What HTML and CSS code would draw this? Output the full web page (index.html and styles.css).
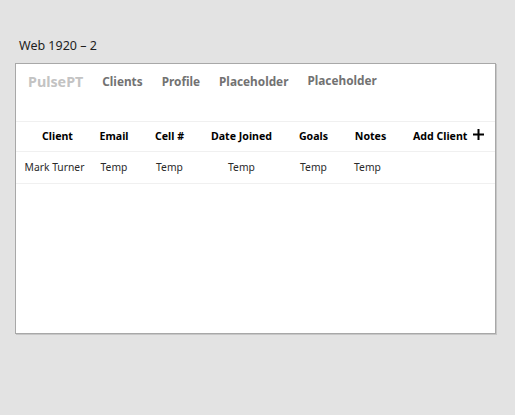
FILE: index.html
```html
<!DOCTYPE html>
<html>
<head>
<meta charset="utf-8">
<link rel="stylesheet" href="styles.css">
</head>
<body>
<div class="title">Web 1920 – 2</div>
<div class="card">
  <nav class="nav">
    <span class="brand">PulsePT</span>
    <span class="link">Clients</span>
    <span class="link">Profile</span>
    <span class="link">Placeholder</span>
    <span class="link raised">Placeholder</span>
  </nav>
  <div class="row head">
    <span>Client</span>
    <span>Email</span>
    <span>Cell #</span>
    <span>Date Joined</span>
    <span>Goals</span>
    <span>Notes</span>
    <span class="add">Add Client
      <svg class="plus" width="11" height="11" viewBox="0 0 11 11"><path d="M5.5 0v11M0 5.5h11" stroke="#000" stroke-width="2"/></svg>
    </span>
  </div>
  <div class="row data">
    <span class="name">Mark Turner</span>
    <span>Temp</span>
    <span>Temp</span>
    <span>Temp</span>
    <span>Temp</span>
    <span class="notes">Temp</span>
    <span></span>
  </div>
</div>
</body>
</html>
```

FILE: styles.css
```css
html, body {
  margin: 0;
  padding: 0;
  background: #e3e3e3;
  width: 515px;
  height: 415px;
  overflow: hidden;
  font-family: "Noto Sans", "Open Sans", sans-serif;
}
.title {
  padding: 36px 0 0 19px;
  height: 63px;
  box-sizing: border-box;
  font-size: 12.5px;
  line-height: 19px;
  color: #1e1e1e;
}
.card {
  margin-left: 15px;
  width: 479px;
  height: 269px;
  background: #fff;
  border: 1px solid #a8a8a8;
  box-shadow: 1px 1px 0 #c6c6c6;
}
.nav {
  display: flex;
  align-items: center;
  gap: 19px;
  padding: 0 0 0 12px;
  height: 34px;
}
.brand {
  font-size: 14.3px;
  font-weight: 700;
  color: #c3c3c3;
}
.link {
  font-size: 11.8px;
  font-weight: 700;
  color: #727272;
}
.raised { position: relative; top: -1px; }
.row {
  display: grid;
  grid-template-columns: 31px 28px 29px 61px 29px 31px auto;
  column-gap: 27px;
  padding-left: 26px;
  align-items: center;
  border-bottom: 1px solid #f0f0f0;
  box-sizing: border-box;
}
.row span { justify-self: center; white-space: nowrap; }
.head {
  margin-top: 23px;
  border-top: 1px solid #f0f0f0;
  height: 31px;
  padding-bottom: 2px;
  font-size: 10.6px;
  font-weight: 700;
  color: #000;
}
.head .add { justify-self: start; display: flex; align-items: center; gap: 6px; }
.data {
  height: 32px;
  padding-bottom: 1px;
  font-size: 10.3px;
  color: #2a2a2a;
}
.data .name { position: relative; left: -3px; }
.data .notes { position: relative; left: -3px; }
.plus { display: block; margin-top: -2px; }
```
